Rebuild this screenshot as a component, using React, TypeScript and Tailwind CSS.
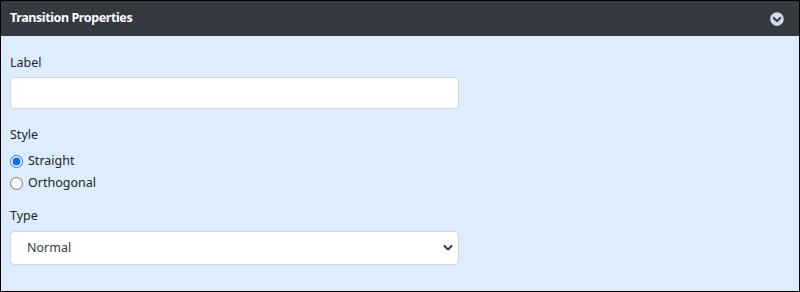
import { FaChevronCircleDown } from "react-icons/fa";

const App = () => {
  return (
    <div className="w-[800px] h-[292px] border border-black bg-[#deedfd] font-['Noto_Sans',sans-serif] text-[#212529] flex flex-col">
      <div className="h-[35px] bg-[#343a40] flex items-center justify-between pl-[9px] pr-[15px]">
        <span className="text-white font-bold text-[12.5px] tracking-[-0.4px]">Transition Properties</span>
        <FaChevronCircleDown className="text-[#d3dde9] w-[14px] h-[14px]" />
      </div>
      <div className="flex flex-col pl-[9px] pt-[18px] w-[458px]">
        <label className="text-[12.5px] leading-[18px]">Label</label>
        <input
          type="text"
          className="mt-[5px] h-[32px] w-full bg-white border border-[#ced4da] rounded-[4px] px-3 outline-none"
        />
        <div className="text-[12.5px] leading-[18px] mt-[17px]">Style</div>
        <label className="flex items-center gap-[5px] text-[12.5px] leading-[18px] mt-[8px]">
          <input type="radio" name="style" defaultChecked className="w-[13px] h-[13px] m-0 accent-[#0d6efd]" />
          Straight
        </label>
        <label className="flex items-center gap-[5px] text-[12.5px] leading-[18px] mt-[4px]">
          <input type="radio" name="style" className="w-[13px] h-[13px] m-0" />
          Orthogonal
        </label>
        <div className="text-[12.5px] leading-[18px] mt-[15px]">Type</div>
        <div className="relative mt-[6px]">
          <select className="appearance-none h-[34px] w-full bg-white border border-[#ced4da] rounded-[4px] pl-[16px] text-[12.5px] text-[#343a40] outline-none">
            <option>Normal</option>
          </select>
          <svg className="absolute right-[6px] top-[13px] w-[10px] h-[8px]" viewBox="0 0 10 8">
            <path d="M1.5 2 L5 5.5 L8.5 2" fill="none" stroke="#343a40" strokeWidth="2" strokeLinecap="round" strokeLinejoin="round" />
          </svg>
        </div>
      </div>
    </div>
  );
};

export default App;
